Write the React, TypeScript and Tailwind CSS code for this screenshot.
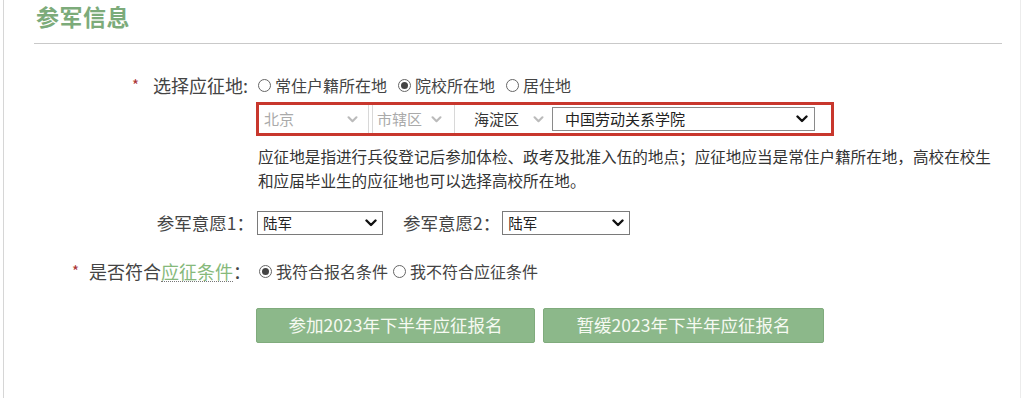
import React from 'react';

const font = { fontFamily: '"Noto Sans CJK SC", "Noto Sans", sans-serif' };

function Chevron({ className }: { className?: string }) {
  return (
    <svg viewBox="0 0 12 8" className={className} fill="none" stroke="currentColor" strokeWidth={2.4} strokeLinecap="round" strokeLinejoin="round">
      <path d="M1.5 1.5 6 6l4.5-4.5" />
    </svg>
  );
}

function Radio({ checked, label }: { checked?: boolean; label: string }) {
  return (
    <label className="flex items-center gap-[4px]">
      <span className="flex h-[13px] w-[13px] items-center justify-center rounded-full border border-[#666] bg-white">
        {checked && <span className="h-[7px] w-[7px] rounded-full bg-[#444]" />}
      </span>
      <span>{label}</span>
    </label>
  );
}

function Select({ value, width }: { value: string; width: string }) {
  return (
    <div className={`flex h-[24px] items-center justify-between border border-[#7a7a7a] bg-white pl-[5px] pr-[5px] text-[14.5px] text-[#222] ${width}`}>
      <span>{value}</span>
      <Chevron className="h-[8px] w-[12px] text-[#111]" />
    </div>
  );
}

export default function App() {
  return (
    <div className="h-[398px] w-[1024px] overflow-hidden bg-white" style={font}>
      <div className="ml-[3px] h-full w-[1018px] border-x border-l-[#d6d6d6] border-r-[#ececec]">
        <div className="flex h-[43px] items-start pl-[32px] pt-[1px]">
          <h2 className="text-[23px] font-bold leading-[30px] tracking-[0.5px] text-[#7cab7a]">参军信息</h2>
        </div>
        <div className="ml-[30px] h-px w-[968px] bg-[#c9c9c9]" />

        <div className="mt-[29px] flex h-[24px] items-center">
          <div className="flex w-[244px] items-center justify-end text-[18px] text-[#444]">
            <span className="mr-[14px] text-[15px] text-[#a33]">*</span>
            <span>选择应征地:</span>
          </div>
          <div className="ml-[10px] flex items-center gap-[11px] text-[16px] text-[#444]">
            <Radio label="常住户籍所在地" />
            <Radio checked label="院校所在地" />
            <Radio label="居住地" />
          </div>
        </div>

        <div className="ml-[252px] mt-[5px] flex h-[34px] w-[578px] items-center border-[3px] border-[#c8372d] text-[15px]">
          <div className="flex h-full w-[110px] items-center justify-between border-r border-[#d8d8d8] pl-[5px] pr-[10px] text-[#aaa]">
            <span>北京</span>
            <Chevron className="h-[7px] w-[11px] text-[#bbb]" />
          </div>
          <div className="ml-[3px] flex h-full w-[83px] items-center justify-between border-x border-[#d8d8d8] pl-[4px] pr-[12px] text-[#aaa]">
            <span>市辖区</span>
            <Chevron className="h-[7px] w-[11px] text-[#bbb]" />
          </div>
          <div className="flex h-full w-[97px] items-center justify-between pl-[19px] pr-[8px] text-[#333]">
            <span>海淀区</span>
            <Chevron className="h-[7px] w-[11px] text-[#bbb]" />
          </div>
          <div className="flex h-[24px] w-[263px] items-center justify-between border border-[#8a8a8a] bg-white pl-[12px] pr-[6px] text-[#222]">
            <span>中国劳动关系学院</span>
            <Chevron className="h-[8px] w-[12px] text-[#111]" />
          </div>
        </div>

        <p className="ml-[254px] mt-[8px] w-[745px] text-[15.6px] leading-[24px] text-[#333]">
          应征地是指进行兵役登记后参加体检、政考及批准入伍的地点；应征地应当是常住户籍所在地，高校在校生和应届毕业生的应征地也可以选择高校所在地。
        </p>

        <div className="mt-[19px] flex h-[24px] items-center text-[17.5px] text-[#444]">
          <div className="w-[250px] text-right">参军意愿1：</div>
          <Select value="陆军" width="ml-[3px] w-[126px]" />
          <div className="ml-[20px]">参军意愿2：</div>
          <Select value="陆军" width="ml-[2px] w-[128px]" />
        </div>

        <div className="mt-[24px] flex h-[24px] items-center">
          <div className="flex w-[247px] items-center justify-end text-[18px] text-[#444]">
            <span className="mr-[10px] text-[15px] text-[#a33]">*</span>
            <span>是否符合</span>
            <span className="border-b border-dotted border-[#777] leading-[20px] text-[#86b97b]">应征条件</span>
            <span>：</span>
          </div>
          <div className="ml-[8px] flex items-center gap-[5px] text-[16px] text-[#444]">
            <Radio checked label="我符合报名条件" />
            <Radio label="我不符合应征条件" />
          </div>
        </div>

        <div className="ml-[252px] mt-[25px] flex gap-[8px]">
          <button className="h-[35px] w-[279px] rounded-[2px] border border-[#80ab7d] bg-[#8cb88a] text-[17.5px] text-[#f6faf2]">
            参加2023年下半年应征报名
          </button>
          <button className="h-[35px] w-[281px] rounded-[2px] border border-[#80ab7d] bg-[#8cb88a] text-[17.5px] text-[#f6faf2]">
            暂缓2023年下半年应征报名
          </button>
        </div>
      </div>
    </div>
  );
}
